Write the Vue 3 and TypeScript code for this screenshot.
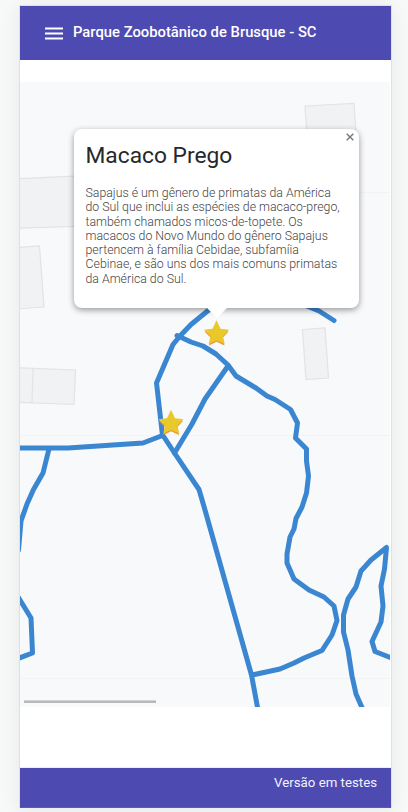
<script setup lang="ts">
interface Marker {
  id: number
  x: number
  y: number
}

const title = 'Parque Zoobotânico de Brusque - SC'
const description: string[] = [
  'Sapajus é um gênero de primatas da América',
  'do Sul que inclui as espécies de macaco-prego,',
  'também chamados micos-de-topete. Os',
  'macacos do Novo Mundo do gênero Sapajus',
  'pertencem à família Cebidae, subfamíia',
  'Cebinae, e são uns dos mais comuns primatas',
  'da América do Sul.',
]

const buildings: string[] = [
  '305,106 354,103.500 357,150 308,152',
  '10,179 90,175.500 90,226 10,228.500',
  '10,248 39.500,246 44,307 10,309.500',
  '10,367.500 75.500,370 74,404.500 10,402',
  '302.500,329.500 325,328 328.500,378 306,379.500',
]

const gridLines: number[] = [192.5, 435.5, 678.5]

const paths: string[] = [
  '10,448 68,448 143,443 162.500,435.500 156.500,383 173,344.500 180,336 191,324.500 210,309 230,294',
  '49,449 43,473 33.500,489.500 27,504 21,521 18.500,550',
  '15,592 20,600 31,618 32.500,653 18,658.500',
  '177,335.500 191,342 203,346 216,354 228,365 236,376 256,388 267,396 275,399.500 290.500,409.500 297.500,423 295.500,438 306.500,449 306.500,461 308.500,476 306.500,493 302,507 296,518.500 294,529 290,537 287,554 287,563 294,579 309,590 324,597 334,606 337,620.500 332,635 322,650.500 304,658 294,663 280,669 252,675',
  '228,366 205,399 192,424 174.500,453',
  '163,435.500 174.500,453 199,489.500 205,510 251.500,675 258,710',
  '290,300 307,306 319,311 334,320.500',
  '364,712 356,694 352,676 348,650 343.500,632 343.500,615 348,599 356,587 361,571 371,560 386.500,547.500 384.500,569 381,586 383,606 381,622 372,641.500 375,651.500 394,659',
]

const markers: Marker[] = [
  { id: 1, x: 216.5, y: 333 },
  { id: 2, x: 171, y: 422.5 },
]
</script>

<template>
  <div class="screen">
    <main class="phone">
      <header class="toolbar">
        <svg class="menu" viewBox="0 0 18 13" aria-hidden="true">
          <path d="M0 1.500H18M0 6.500H18M0 11.500H18" />
        </svg>
        <h1 class="title">{{ title }}</h1>
      </header>

      <section class="map">
        <svg class="canvas" viewBox="20 82 370 625">
          <g class="buildings">
            <polygon v-for="b in buildings" :key="b" :points="b" />
            <path d="M33 368L32 402.500" />
          </g>
          <g class="grid">
            <line v-for="y in gridLines" :key="y" x1="20" x2="390" :y1="y" :y2="y" />
          </g>
          <g class="trails">
            <polyline v-for="p in paths" :key="p" :points="p" />
          </g>
          <g v-for="m in markers" :key="m.id" :transform="`translate(${m.x} ${m.y})`">
            <path
              class="star-shade"
              transform="translate(0 1)"
              d="M0 -12L3.800 -3.500L12 -2.500L6.200 3.800L8 11.500L0 7.700L-7.500 11.500L-5.800 3.800L-12 -2.500L-3.800 -3.500Z"
            />
            <path
              class="star"
              d="M0 -12.700L4 -4.200L12.500 -3.200L6.500 3.300L8.200 11L0 7.600L-7.800 11L-6 3.300L-12.500 -3.200L-4 -4.200Z"
            />
          </g>
        </svg>
        <div class="scale"></div>

        <article class="popup">
          <svg class="close" viewBox="0 0 8 8" role="button">
            <path d="M0.700 0.700L7.300 7.300M7.300 0.700L0.700 7.300" />
          </svg>
          <h2 class="name">Macaco Prego</h2>
          <p class="description">
            <span v-for="line in description" :key="line" class="line">{{ line }}</span>
          </p>
        </article>
      </section>

      <footer class="footer">Versão em testes</footer>
    </main>
  </div>
</template>

<style>
body {
  margin: 0;
  background: #f7f9f8;
}
</style>

<style scoped>
.screen {
  box-sizing: border-box;
  height: 812px;
  padding: 5px 16px 0 19px;
  overflow: hidden;
  font-family: Roboto, 'Liberation Sans', sans-serif;
}

.phone {
  box-sizing: border-box;
  display: flex;
  flex-direction: column;
  height: 803px;
  border: 1px solid #dfe1e1;
  border-bottom: 0;
  background: #fff;
  box-shadow: 0 2px 18px rgba(0, 0, 0, 0.07);
}

.toolbar {
  box-sizing: border-box;
  display: flex;
  align-items: center;
  gap: 10px;
  height: 54px;
  padding: 0 25px 2px;
  background: #4d4ab2;
  color: #fff;
}

.menu {
  width: 18px;
  height: 13px;
  margin-top: 3px;
  fill: none;
  stroke: #fff;
  stroke-width: 1.8;
}

.title {
  margin: 0;
  font-size: 14.8px;
  font-weight: 500;
  line-height: 20px;
  white-space: nowrap;
}

.map {
  position: relative;
  width: 370px;
  height: 625px;
  margin-top: 22px;
  background: #f8f9fb;
}

.canvas {
  display: block;
  width: 370px;
  height: 625px;
}

.buildings {
  fill: #f1f2f4;
  stroke: #e2e3e5;
  stroke-width: 1.2;
}

.trails {
  fill: none;
  stroke: #3a86d1;
  stroke-width: 5;
  stroke-linecap: round;
  stroke-linejoin: round;
}

.grid {
  stroke: #eef2f0;
  stroke-opacity: 0.8;
}

.star {
  fill: #e9c829;
}

.star-shade {
  fill: #ed9639;
}

.scale {
  position: absolute;
  left: 4px;
  bottom: 4px;
  box-sizing: border-box;
  width: 132px;
  height: 3px;
  border-top: 1px solid #d2d3d4;
  background: #b8b9b9;
}

.popup {
  position: absolute;
  left: 54px;
  top: 47px;
  box-sizing: border-box;
  width: 285px;
  height: 179px;
  padding: 14px 11.5px 0;
  border-radius: 8px;
  background: #fff;
  box-shadow: 0 2px 6px rgba(0, 0, 0, 0.4);
}

.popup::after {
  content: '';
  position: absolute;
  left: 132px;
  top: 178px;
  border: 11px solid transparent;
  border-top-color: #fff;
  border-bottom: 0;
}

.close {
  position: absolute;
  top: 4px;
  right: 5px;
  width: 8px;
  height: 8px;
  fill: none;
  stroke: #777;
  stroke-width: 1.4;
}

.name {
  margin: 0;
  color: #25282c;
  font-size: 22.75px;
  font-weight: 400;
  line-height: 25px;
}

.description {
  margin: 18px 0 0;
  color: #444;
  font-size: 12.34px;
  font-weight: 300;
  line-height: 14.27px;
}

.line {
  display: block;
  white-space: nowrap;
}

.footer {
  box-sizing: border-box;
  height: 41px;
  margin-top: auto;
  padding: 6px 14px 0 0;
  border-top: 1px solid #eeeef0;
  border-bottom: 1px solid #5a57bd;
  background: #4d4ab2;
  color: #f3f3fc;
  font-size: 13.25px;
  line-height: 18px;
  text-align: right;
}
</style>
